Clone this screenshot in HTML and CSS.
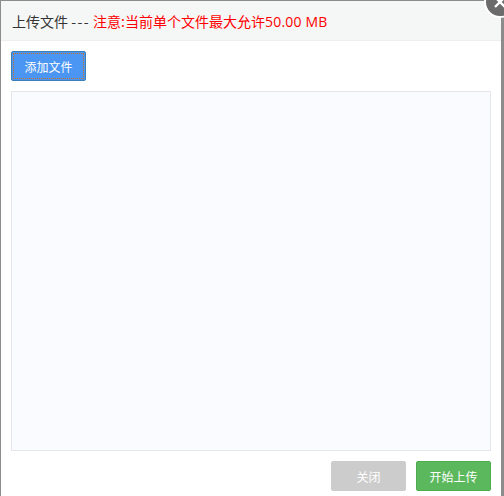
FILE: index.html
```html
<!DOCTYPE html>
<html lang="zh-CN">
<head>
    <meta charset="UTF-8">
    <meta name="viewport" content="width=device-width, initial-scale=1.0">
    <title>上传文件</title>
    <link rel="stylesheet" href="styles.css">
</head>
<body>
    <div class="layer">
        <div class="layer-title">
            上传文件 <span class="layer-dash">---</span> <span class="layer-note">注意:当前单个文件最大允许<span class="layer-size">50.00 MB</span></span>
        </div>
        <div class="layer-content">
            <div class="toolbar">
                <button type="button" class="btn btn-add">添加文件</button>
            </div>
            <div class="file-list"></div>
            <div class="actions">
                <button type="button" class="btn btn-close">关闭</button>
                <button type="button" class="btn btn-start">开始上传</button>
            </div>
        </div>
        <a class="layer-x" href="#">
            <svg width="14" height="14" viewBox="0 0 14 14">
                <path d="M2 2 L12 12 M12 2 L2 12" stroke="#fff" stroke-width="2.4"/>
            </svg>
        </a>
    </div>
</body>
</html>
```

FILE: styles.css
```css
* {
    box-sizing: border-box;
}

html, body {
    margin: 0;
    height: 100%;
    overflow: hidden;
}

body {
    font-family: "Noto Sans CJK SC", "Liberation Sans", sans-serif;
    background-color: #8c8c8c;
}

.layer {
    position: relative;
    width: 500px;
    height: 496px;
    margin-left: 1px;
    margin-top: 1px;
    background-color: #fff;
}

.layer-title {
    height: 40px;
    padding-left: 11px;
    line-height: 41px;
    font-size: 14px;
    color: #333;
    background-color: #f5f7f6;
    border-bottom: 1px solid #eee;
}

.layer-dash {
    letter-spacing: 1.4px;
}

.layer-note {
    color: #f00;
}

.layer-size {
    font-family: "Open Sans", sans-serif;
    letter-spacing: 0.2px;
}

.layer-content {
    padding: 10px 10px 0;
}

.toolbar {
    height: 40px;
}

.btn {
    width: 75px;
    height: 30px;
    padding: 0;
    font-family: inherit;
    font-size: 12px;
    color: #fff;
    border-radius: 2px;
    border: 1px solid transparent;
}

.btn-add {
    background-color: #4a96f2;
    border-color: #3a7fb8;
    outline: 1px dotted #c8702a;
    outline-offset: -3px;
}

.file-list {
    height: 360px;
    background-color: #fafbff;
    border: 1px solid #e4e6ec;
}

.actions {
    display: flex;
    justify-content: flex-end;
    gap: 10px;
    margin-top: 10px;
}

.btn-close {
    background-color: #ccc;
    border-color: #ccc;
}

.btn-start {
    background-color: #5cb85c;
    border-color: #4cae4c;
}

.layer-x {
    position: absolute;
    top: -15px;
    right: -15px;
    width: 32px;
    height: 32px;
    display: flex;
    align-items: center;
    justify-content: center;
    background-color: #6b6b6b;
    border: 2px solid #fff;
    border-radius: 50%;
}
```
